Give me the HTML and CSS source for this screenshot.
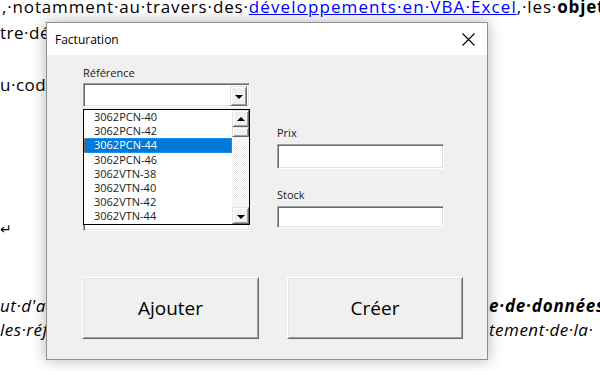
FILE: index.html
```html
<!DOCTYPE html>
<html lang="fr">
<head>
    <meta charset="UTF-8">
    <title>Facturation</title>
    <link rel="stylesheet" href="styles.css">
</head>
<body>
    <div class="doc">
        <p class="line l1">,·notamment·au·travers·des·<a href="#">développements·en·VBA·Excel</a>,·les·<b>objets</b></p>
        <p class="line l2">tre·démontrer·comment·exploiter·les·listes</p>
        <p class="line l3">u·code·qui·permet·de·les·remplir</p>
        <p class="line l4">↵</p>
        <p class="line split l5"><i>ut·d'abord·construire·la</i><i><b>e·de·données</b></i></p>
        <p class="line split l6"><i>les·références·pour·le·trai</i><i>tement·de·la·</i></p>
    </div>

    <!-- userform window -->
    <div class="dialog">
        <div class="titlebar">
            <span class="title">Facturation</span>
            <svg class="close" width="13" height="13" viewBox="0 0 13 13">
                <path d="M0.5 0.5 L12.5 12.5 M12.5 0.5 L0.5 12.5" stroke="#000" stroke-width="1.1" fill="none"/>
            </svg>
        </div>
        <div class="content">
            <div class="fields">
                <div class="col col-left">
                    <div class="label">Référence</div>
                    <div class="combo sunken">
                        <div class="drop-btn raised"><span class="arrow-down"></span></div>
                    </div>
                    <div class="under-box sunken"></div>

                    <div class="droplist">
                        <div class="items">
                            <div class="item">3062PCN-40</div>
                            <div class="item">3062PCN-42</div>
                            <div class="item selected">3062PCN-44</div>
                            <div class="item">3062PCN-46</div>
                            <div class="item">3062VTN-38</div>
                            <div class="item">3062VTN-40</div>
                            <div class="item">3062VTN-42</div>
                            <div class="item">3062VTN-44</div>
                        </div>
                        <div class="scrollbar">
                            <div class="sb-btn raised"><span class="arrow-up"></span></div>
                            <div class="sb-thumb raised"></div>
                            <div class="sb-track"></div>
                            <div class="sb-btn raised"><span class="arrow-down"></span></div>
                        </div>
                    </div>
                </div>
                <div class="col col-right">
                    <div class="label label-prix">Prix</div>
                    <div class="textbox prix sunken"></div>
                    <div class="label label-stock">Stock</div>
                    <div class="textbox stock sunken"></div>
                </div>
            </div>
            <div class="buttons">
                <button class="btn btn-add">Ajouter</button>
                <button class="btn btn-new">Créer</button>
            </div>
        </div>
    </div>
</body>
</html>
```

FILE: styles.css
```css
html, body {
    margin: 0;
    padding: 0;
    width: 600px;
    height: 371px;
    overflow: hidden;
    background: #fff;
}
.doc {
    font-family: "Open Sans", sans-serif;
    font-size: 17px;
    letter-spacing: 0.5px;
    color: #000;
    margin-top: -6px;
}
.line {
    margin: 0;
    height: 26px;
    line-height: 26px;
    white-space: nowrap;
}
.line a {
    color: #0000ff;
    letter-spacing: 1.1px;
}
.l1 {
    padding-left: 2px;
    letter-spacing: 0.85px;
}
.l3 {
    margin-top: 26px;
}
.l4 {
    margin-top: 118px;
    font-family: "DejaVu Sans", sans-serif;
    font-size: 14px;
}
.l5 {
    margin-top: 51px;
}
.l6 {
    margin-top: -2px;
}
.split {
    display: grid;
    grid-template-columns: 489px auto;
    overflow: hidden;
}
.split i {
    overflow: hidden;
}
.l5 b {
    letter-spacing: 0.8px;
}

/* dialog */
.dialog {
    position: absolute;
    left: 46px;
    top: 22px;
    width: 440px;
    height: 336px;
    border: 1px solid #8f8f8f;
    background: #f0f0f0;
    box-shadow: 0 0 14px rgba(0, 0, 0, 0.3);
    display: flex;
    flex-direction: column;
    font-family: "Open Sans", sans-serif;
}
.titlebar {
    height: 32px;
    background: #fff;
    display: flex;
    align-items: center;
    justify-content: space-between;
    padding: 0 12px 0 8px;
    font-size: 12px;
    color: #000;
}
.content {
    padding: 10px 0 0 36px;
}
.fields {
    display: flex;
    gap: 27px;
    height: 166px;
}
.col {
    width: 167px;
    display: flex;
    flex-direction: column;
}
.col-left {
    position: relative;
}
.label {
    height: 18px;
    line-height: 16px;
    font-size: 11px;
    color: #1a1a1a;
}
.sunken {
    box-sizing: border-box;
    background: #fff;
    border: 1px solid;
    border-color: #a0a0a0 #fff #fff #a0a0a0;
    box-shadow: inset 1px 1px #696969, inset -1px -1px #e3e3e3;
}
.raised {
    box-sizing: border-box;
    background: #f0f0f0;
    border: 1px solid;
    border-color: #e3e3e3 #696969 #696969 #e3e3e3;
    box-shadow: inset 1px 1px #fff, inset -1px -1px #a0a0a0;
    display: flex;
    align-items: center;
    justify-content: center;
}
.combo {
    height: 24px;
    display: flex;
    justify-content: flex-end;
    padding: 2px;
}
.drop-btn {
    width: 17px;
    height: 20px;
}
.arrow-down {
    width: 0;
    height: 0;
    border-left: 4px solid transparent;
    border-right: 4px solid transparent;
    border-top: 4px solid #000;
    margin-top: 2px;
}
.arrow-up {
    width: 0;
    height: 0;
    border-left: 4px solid transparent;
    border-right: 4px solid transparent;
    border-bottom: 4px solid #000;
}
.under-box {
    margin-top: 4px;
    height: 120px;
}
.droplist {
    position: absolute;
    top: 44px;
    left: 0;
    width: 167px;
    height: 116px;
    box-sizing: border-box;
    border: 1px solid #000;
    background: #fff;
    display: flex;
}
.items {
    flex: 1;
}
.item {
    height: 14.2px;
    line-height: 14.2px;
    font-size: 11px;
    padding-left: 10px;
    color: #1a1a1a;
}
.item.selected {
    background: #0078d7;
    color: #fff;
    outline: 1px dotted #b8864e;
    outline-offset: -1px;
}
.scrollbar {
    width: 17px;
    display: flex;
    flex-direction: column;
    background-color: #f4f4f4;
    background-image: repeating-conic-gradient(#fff 0 25%, #ececec 0 50%);
    background-size: 2px 2px;
}
.sb-btn {
    height: 17px;
}
.sb-thumb {
    height: 10px;
}
.sb-track {
    flex: 1;
}
.label-prix {
    margin-top: 60px;
}
.textbox {
    margin-top: 1px;
}
.prix {
    height: 25px;
}
.label-stock {
    margin-top: 18px;
}
.stock {
    height: 22px;
}
.buttons {
    display: flex;
    gap: 28px;
    margin-top: 46px;
    margin-left: -1px;
}
.btn {
    width: 177px;
    height: 62px;
    box-sizing: border-box;
    background: #f0f0f0;
    border: 1px solid;
    border-color: #fff #696969 #696969 #fff;
    box-shadow: inset 1px 1px #e3e3e3, inset -1px -1px #a0a0a0;
    font-family: "Open Sans", sans-serif;
    font-size: 19px;
    color: #000;
    padding: 0;
}
.btn-new {
    width: 176px;
}
```
